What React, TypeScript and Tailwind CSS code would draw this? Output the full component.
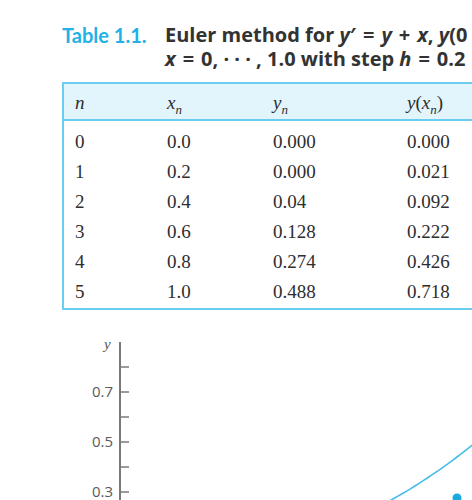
const rows = [
  ['0', '0.0', '0.000', '0.000'],
  ['1', '0.2', '0.000', '0.021'],
  ['2', '0.4', '0.04', '0.092'],
  ['3', '0.6', '0.128', '0.222'],
  ['4', '0.8', '0.274', '0.426'],
  ['5', '1.0', '0.488', '0.718'],
];

const cols = 'grid grid-cols-[92px_106px_134px_1fr]';

// chart helpers: y = 0 sits at 565px on the page, chart top is 330px
const TOP = 330;
const px = (x: number) => 121 + 414 * x;
const py = (y: number) => 565 - 250 * y - TOP;

function curvePath() {
  const pts: string[] = [];
  for (let x = 0.6; x <= 0.9; x += 0.01) {
    const y = Math.exp(x) - x - 1;
    pts.push(`${px(x).toFixed(1)},${py(y).toFixed(1)}`);
  }
  return 'M' + pts.join(' L');
}

function Chart() {
  const ticks = [365, 390, 415, 440, 465, 490];
  const labels = [
    { y: 390, t: '0.7' },
    { y: 440, t: '0.5' },
    { y: 490, t: '0.3' },
  ];
  return (
    <svg width="472" height="170" className="block mt-[22px]">
      <line x1="120" y1={340 - TOP} x2="120" y2="170" stroke="#7a7a7a" strokeWidth="2" />
      {ticks.map((t) => (
        <line key={t} x1="120" y1={t - TOP} x2="129" y2={t - TOP} stroke="#7a7a7a" strokeWidth="1.5" />
      ))}
      {labels.map((l) => (
        <text
          key={l.t}
          x="113"
          y={l.y - TOP + 5}
          textAnchor="end"
          fontSize="15"
          fill="#5a5a5a"
          fontFamily="'Open Sans', sans-serif"
        >
          {l.t}
        </text>
      ))}
      <text x="104" y={347 - TOP} fontSize="15" fill="#555" fontStyle="italic" fontFamily="'Liberation Serif', serif">
        y
      </text>
      <path d={curvePath()} fill="none" stroke="#45bde9" strokeWidth="1.6" />
      <circle cx="457" cy={496 - TOP} r="4.5" fill="#19a9e1" />
    </svg>
  );
}

function Sub({ base, sub }: { base: string; sub: string }) {
  return (
    <span className="italic">
      {base}
      <sub className="text-[13px] align-[-2px]">{sub}</sub>
    </span>
  );
}

// math operator with wide spacing like the typeset title
const Op = ({ c }: { c: string }) => <span className="mx-[7px]">{c}</span>;

export default function App() {
  return (
    <div className="w-[472px] h-[500px] overflow-hidden bg-white">
      <div className="pt-[23px] pl-[62px] whitespace-nowrap font-['Open_Sans',sans-serif] font-bold text-[20px] leading-[24px] text-[#333]">
        <div className="flex">
          <span className="w-[103px] shrink-0 font-['Lato',sans-serif] text-[#1fb2e6]">Table 1.1.</span>
          <div>
            <div>
              Euler method for <i>y</i>′<Op c="=" /><i>y</i><Op c="+" /><i>x</i>, <i>y</i>(0
            </div>
            <div>
              <i>x</i><Op c="=" />0, · · · , 1.0 with step <i>h</i><Op c="=" />0.2
            </div>
          </div>
        </div>
      </div>

      <div className="ml-[62px] mt-[11px] w-[440px] border-2 border-[#6acdf0] font-['Liberation_Serif',serif] text-[19px] text-[#2e2e2e]">
        <div className={`${cols} h-[37px] items-center bg-[#e3f5fc] border-b-2 border-[#6acdf0] pt-[3px]`}>
          <span className="pl-[11px] italic">n</span>
          <span className="pl-[11px]">
            <Sub base="x" sub="n" />
          </span>
          <span className="pl-[11px]">
            <Sub base="y" sub="n" />
          </span>
          <span className="pl-[11px]">
            <i>y</i>(<Sub base="x" sub="n" />)
          </span>
        </div>
        <div className="pt-[6px] pb-[1px]">
          {rows.map((r) => (
            <div key={r[0]} className={`${cols} h-[30px] items-center`}>
              {r.map((c, i) => (
                <span key={i} className="pl-[11px]">
                  {c}
                </span>
              ))}
            </div>
          ))}
        </div>
      </div>

      <Chart />
    </div>
  );
}
